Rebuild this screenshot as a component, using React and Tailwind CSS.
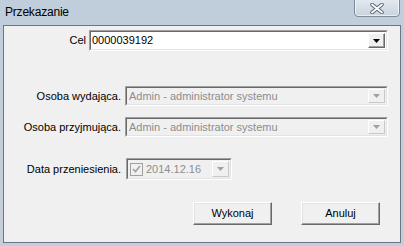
import React from "react";

function Arrow({ disabled }) {
  return (
    <div
      className={
        "absolute right-[2px] top-[2px] bottom-[2px] w-[17px] flex items-center justify-center bg-[#f0f0f0] border-t border-l border-b border-r " +
        (disabled
          ? "border-t-white border-l-white border-b-[#c8c8c8] border-r-[#c8c8c8]"
          : "border-t-white border-l-white border-b-[#696969] border-r-[#696969] shadow-[inset_-1px_-1px_0_#a0a0a0]")
      }
    >
      <svg width="7" height="4" viewBox="0 0 7 4">
        <path d="M0 0H7L3.5 4Z" fill={disabled ? "#a0a0a0" : "#000"} />
      </svg>
    </div>
  );
}

function Sunken({ className, children, white }) {
  return (
    <div
      className={
        "relative border border-t-[#a0a0a0] border-l-[#a0a0a0] border-b-white border-r-white " +
        className
      }
    >
      <div
        className={
          "absolute inset-0 border border-t-[#696969] border-l-[#696969] border-b-[#e3e3e3] border-r-[#e3e3e3] " +
          (white ? "bg-white" : "bg-[#f0f0f0]")
        }
      />
      <div className="relative h-full flex items-center">{children}</div>
    </div>
  );
}

function Btn({ children }) {
  return (
    <div className="w-[79px] h-[23px] border border-t-white border-l-white border-b-[#696969] border-r-[#696969] bg-[#f0f0f0] shadow-[inset_-1px_-1px_0_#a0a0a0,inset_1px_1px_0_#e3e3e3] flex items-center justify-center text-[11px] text-black">
      {children}
    </div>
  );
}

export default function App() {
  return (
    <div className="w-[404px] h-[246px] bg-gradient-to-b from-[#c0cddb] to-[#c6cfd9] flex flex-col font-['Liberation_Sans',Arial,sans-serif] overflow-hidden">
      <div className="h-[25px] relative shrink-0">
        <span className="absolute left-[5px] top-[4px] text-[12px] leading-[16px] text-black tracking-[-0.2px]">
          Przekazanie
        </span>
        <div className="absolute right-[4px] top-[-2px] w-[46px] h-[19px] rounded-b-[4px] border border-[#7f8b99] bg-gradient-to-b from-[#e4eaf0] to-[#c9d3de] shadow-[inset_0_0_0_1px_rgba(255,255,255,0.6)] flex items-center justify-center pt-[2px]">
          <svg width="14" height="11" viewBox="0 0 14 11">
            <path d="M2 1.5L12 9.5M12 1.5L2 9.5" stroke="#59636e" strokeWidth="3.6" strokeLinecap="round" />
            <path d="M2 1.5L12 9.5M12 1.5L2 9.5" stroke="#ffffff" strokeWidth="1.8" strokeLinecap="round" />
          </svg>
        </div>
      </div>
      <div className="mx-[3px] mb-[3px] flex-1 border border-[#6b7683] bg-[#f0f0f0] flex flex-col text-[11px] text-black">
        <div className="flex items-center mt-[4px] h-[21px]">
          <div className="w-[82px] text-right">Cel</div>
          <Sunken white className="ml-[3px] w-[299px] h-[21px]">
            <span className="pl-[2px] text-[11px] text-black">0000039192</span>
            <Arrow />
          </Sunken>
        </div>
        <div className="flex items-center mt-[35px] h-[20px]">
          <div className="w-[117px] text-right">Osoba wydająca.</div>
          <Sunken className="ml-[4px] w-[263px] h-[20px]">
            <span className="pl-[3px] text-[#8d8d8d]">Admin - administrator systemu</span>
            <Arrow disabled />
          </Sunken>
        </div>
        <div className="flex items-center mt-[11px] h-[20px]">
          <div className="w-[117px] text-right">Osoba przyjmująca.</div>
          <Sunken className="ml-[4px] w-[263px] h-[20px]">
            <span className="pl-[3px] text-[#8d8d8d]">Admin - administrator systemu</span>
            <Arrow disabled />
          </Sunken>
        </div>
        <div className="flex items-center mt-[21px] h-[22px]">
          <div className="w-[117px] text-right">Data przeniesienia.</div>
          <Sunken className="ml-[5px] w-[106px] h-[22px]">
            <div className="ml-[3px] w-[13px] h-[13px] border border-[#a0a0a0] bg-[#f0f0f0] flex items-center justify-center">
              <svg width="9" height="8" viewBox="0 0 9 8">
                <path d="M1 4L3.5 6.5L8 1" stroke="#a0a0a0" strokeWidth="1.6" fill="none" />
              </svg>
            </div>
            <span className="pl-[3px] text-[11px] text-[#8d8d8d]">2014.12.16</span>
            <Arrow disabled />
          </Sunken>
        </div>
        <div className="flex mt-[22px] pl-[189px] gap-[29px]">
          <Btn>Wykonaj</Btn>
          <Btn>Anuluj</Btn>
        </div>
      </div>
    </div>
  );
}
